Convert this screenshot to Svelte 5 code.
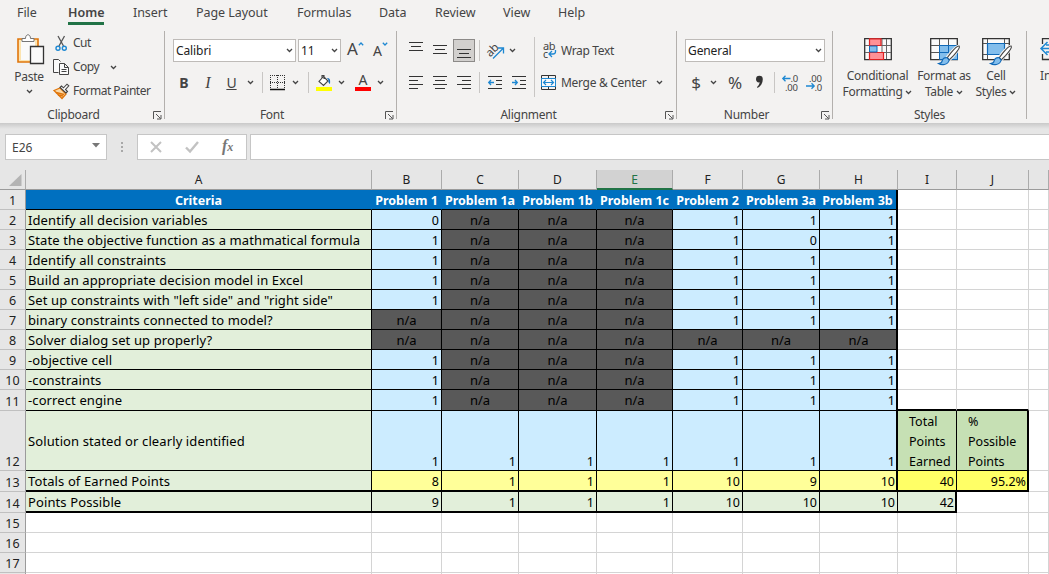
<script lang="ts">
  type Cell = { text: string; kind: string };

  const tabs = [
    { name: "File", width: 51 },
    { name: "Home", width: 65 },
    { name: "Insert", width: 63 },
    { name: "Page Layout", width: 101 },
    { name: "Formulas", width: 82 },
    { name: "Data", width: 56 },
    { name: "Review", width: 68 },
    { name: "View", width: 55 },
    { name: "Help", width: 60 },
  ];

  const columns = ["A", "B", "C", "D", "E", "F", "G", "H", "I", "J", ""];
  const letters = "ABCDEFGHIJK";

  const scores: [string, string[]][] = [
    ["Identify all decision variables", ["0", "n/a", "n/a", "n/a", "1", "1", "1"]],
    ["State the objective function as a mathmatical formula", ["1", "n/a", "n/a", "n/a", "1", "0", "1"]],
    ["Identify all constraints", ["1", "n/a", "n/a", "n/a", "1", "1", "1"]],
    ["Build an appropriate decision model in Excel", ["1", "n/a", "n/a", "n/a", "1", "1", "1"]],
    ['Set up constraints with "left side" and "right side"', ["1", "n/a", "n/a", "n/a", "1", "1", "1"]],
    ["binary constraints connected to model?", ["n/a", "n/a", "n/a", "n/a", "1", "1", "1"]],
    ["Solver dialog set up properly?", ["n/a", "n/a", "n/a", "n/a", "n/a", "n/a", "n/a"]],
    ["-objective cell", ["1", "n/a", "n/a", "n/a", "1", "1", "1"]],
    ["-constraints", ["1", "n/a", "n/a", "n/a", "1", "1", "1"]],
    ["-correct engine", ["1", "n/a", "n/a", "n/a", "1", "1", "1"]],
    ["Solution stated or clearly identified", ["1", "1", "1", "1", "1", "1", "1"]],
  ];

  const blank = (n: number): Cell[] => Array.from({ length: n }, () => ({ text: "", kind: "empty" }));
  const fill = (values: string[], kind: string): Cell[] => values.map((text) => ({ text, kind }));

  const rows: Cell[][] = [
    [
      ...fill(["Criteria", "Problem 1", "Problem 1a", "Problem 1b", "Problem 1c", "Problem 2", "Problem 3a", "Problem 3b"], "head"),
      ...blank(3),
    ],
    ...scores.map(([label, values], i) => [
      { text: label, kind: "label" },
      ...values.map((text) => ({ text, kind: text === "n/a" ? "na" : "score" })),
      ...(i === 10
        ? [...fill(["Total\nPoints\nEarned", "%\nPossible\nPoints"], "summary"), ...blank(1)]
        : blank(3)),
    ]),
    [
      { text: "Totals of Earned Points", kind: "label" },
      ...fill(["8", "1", "1", "1", "10", "9", "10"], "earned"),
      ...fill(["40", "95.2%"], "total"),
      ...blank(1),
    ],
    [
      { text: "Points Possible", kind: "label" },
      ...fill(["9", "1", "1", "1", "10", "10", "10", "42"], "possible"),
      ...blank(2),
    ],
    blank(11),
    blank(11),
    blank(11),
    blank(11),
  ];
</script>

{#snippet chevron()}
  <svg class="chevron" width="7" height="5" viewBox="0 0 7 5"><path d="M1 1l2.5 2.5L6 1" fill="none" stroke="#444" stroke-width="1.3" /></svg>
{/snippet}

{#snippet launcher()}
  <svg class="launcher" width="9" height="9" viewBox="0 0 9 9" fill="none" stroke="#555">
    <path d="M.5 8V.5H8M3 3l4.5 4.5M8 4v4H4" />
  </svg>
{/snippet}

{#snippet brush()}
  <path d="M28.8 8.2c-2 0-4.6 2.5-8.6 7.3l-3 4 2 2.3 3.8-3.5c3.5-4 6.8-8 5.8-10.1z" fill="#f9f8f7" stroke="#f3f2f1" stroke-width="3" />
  <path d="M29.2 8c-1.7-.5-5 2.8-8.5 7.2l-3.4 4.5 1.900 2.200 4.300-4.200c3.700-4.100 6.800-8.400 5.700-9.700z" fill="#fff" stroke="#444" stroke-width="1.1" />
  <path d="M17 19.7c-3-.3-4.500 1.500-4.900 3.500-.3 1.500-1.800 2.200-3.600 2.300 2.800 1.900 9.500 1.800 10.700-3.500z" fill="#83beec" stroke="#1069b8" stroke-width="1.1" />
{/snippet}

<div class="excel">
  <nav class="tabs">
    {#each tabs as tab}
      <div class="tab" class:active={tab.name === "Home"} style="width: {tab.width}px"><span>{tab.name}</span></div>
    {/each}
  </nav>

  <div class="ribbon">
    <section class="group clipboard">
      <div class="tools">
        <div class="paste">
          <svg width="28" height="31" viewBox="0 0 28 31">
            <path d="M1 5h20v23H1z" fill="#fce4b0" stroke="#e0750a" stroke-width="1.6" />
            <path d="M4 7h14v19H4z" fill="#fafafa" />
            <path d="M5 7.500V4.500h3.500C8.500-.5 13.500-.5 13.500 4.500H17v3z" fill="#fff" stroke="#767676" />
            <path d="M13.500 12.500h13v17h-13z" fill="#fafafa" stroke="#333" stroke-width="1.3" />
          </svg>
          <span>Paste</span>
          {@render chevron()}
        </div>
        <div class="edits">
          <div class="edit">
            <svg width="17" height="17" viewBox="0 0 17 17" fill="none">
              <path d="M5 1l5.500 10M11.500 1L6 11" stroke="#555" stroke-width="1.3" />
              <circle cx="5" cy="13.3" r="2" stroke="#1e88d2" stroke-width="1.4" />
              <circle cx="11.3" cy="13.3" r="2" stroke="#1e88d2" stroke-width="1.4" />
            </svg>
            <span>Cut</span>
          </div>
          <div class="edit">
            <svg width="17" height="17" viewBox="0 0 17 17" fill="#fafafa" stroke="#444">
              <path d="M5.500 13.500h-5V.5h5l2 2" />
              <path d="M6.500 4.500h5l4 4v7h-9zM11.500 4.500v4h4M8.500 10.500h5M8.500 12.500h5" />
            </svg>
            <span>Copy</span>
            {@render chevron()}
          </div>
          <div class="edit">
            <svg width="17" height="17" viewBox="0 0 17 17">
              <path d="M1 7.500l6-2.500 6 6-4 4.500z" fill="#fbd9a6" stroke="#e0750a" stroke-width="1.3" />
              <path d="M3 9.500l8 2M5 12l5 1" stroke="#e0750a" stroke-width="1.5" />
              <path d="M7 4.500l1.500-1.500 2 1.800L14 1.200l1.800 1.700-3.300 3.600 2 2-1.500 1.500z" fill="#fff" stroke="#444" stroke-width="1.1" />
            </svg>
            <span>Format Painter</span>
          </div>
        </div>
      </div>
      <footer><span>Clipboard</span>{@render launcher()}</footer>
    </section>

    <section class="group font">
      <div class="font-pick">
        <div class="select"><span>Calibri</span>{@render chevron()}</div>
        <div class="select"><span>11</span>{@render chevron()}</div>
        <div class="grow">A<svg width="6" height="4" viewBox="0 0 6 4"><path d="M.8 3.200L3 1l2.200 2.200" fill="none" stroke="#1e88d2" stroke-width="1.3" /></svg></div>
        <div class="grow small">A<svg width="6" height="4" viewBox="0 0 6 4"><path d="M.8.800L3 3 5.200.800" fill="none" stroke="#1e88d2" stroke-width="1.3" /></svg></div>
      </div>
      <div class="font-style">
        <b>B</b>
        <i>I</i>
        <u>U</u>
        {@render chevron()}
        <span class="rule"></span>
        <svg width="16" height="16" viewBox="0 0 16 16" fill="none" stroke="#333">
          <path d="M0 .5h15M0 7.500h15M.5 0v14M7.500 0v14M14.500 0v14" stroke-dasharray="1 1" />
          <path d="M0 14.500h15" stroke="#111" stroke-width="1.5" />
        </svg>
        {@render chevron()}
        <span class="rule"></span>
        <svg width="16" height="17" viewBox="0 0 16 17">
          <path d="M7.500 2.500L12 7l-4.500 4.500L3 7.500zM6 5V1.500h2V5" fill="#fff" stroke="#444" stroke-width="1.1" />
          <path d="M11 4c3 0 3.500 2 3 6-1.500-1-2-2.500-1.500-4z" fill="#1069b8" />
          <path d="M0 13h16v4H0z" fill="#ff0" />
        </svg>
        {@render chevron()}
        <span class="ink">A</span>
        {@render chevron()}
      </div>
      <footer><span>Font</span>{@render launcher()}</footer>
    </section>

    <section class="group alignment">
      <div class="tools">
        <div class="align">
          <div class="align-row">
            <svg width="14" height="20" viewBox="0 0 14 20" stroke="#333"><path d="M0 1.500h14M2 5.500h10M0 9.500h14" /></svg>
            <svg width="14" height="20" viewBox="0 0 14 20" stroke="#333"><path d="M0 4.500h14M2 8.500h10M0 12.500h14" /></svg>
            <div class="pressed"><svg width="14" height="20" viewBox="0 0 14 20" stroke="#333"><path d="M0 8.500h14M2 12.500h10M0 16.500h14" /></svg></div>
            <span class="rule"></span>
            <svg width="18" height="18" viewBox="0 0 18 18">
              <text class="glyph" x="-1.5" y="12" transform="rotate(-45 5 8)" font-size="11.5">ab</text>
              <path d="M6 16.500L16 6.500M11 6h5.500v5.500" fill="none" stroke="#1e88d2" stroke-width="1.3" />
            </svg>
            {@render chevron()}
          </div>
          <div class="align-row lower">
            <svg width="14" height="14" viewBox="0 0 14 14" stroke="#333"><path d="M0 .5h14M0 4.500h9M0 8.500h14M0 12.500h9" /></svg>
            <svg width="14" height="14" viewBox="0 0 14 14" stroke="#333"><path d="M0 .5h14M2 4.500h10M0 8.500h14M2 12.500h10" /></svg>
            <svg width="14" height="14" viewBox="0 0 14 14" stroke="#333"><path d="M0 .5h14M5 4.500h9M0 8.500h14M5 12.500h9" /></svg>
            <span class="rule"></span>
            <svg width="14" height="14" viewBox="0 0 14 14" fill="none" stroke="#333">
              <path d="M0 .5h14M8 4.500h6M8 8.500h6M0 12.500h14" />
              <path d="M.8 6.500H6M3 4L.7 6.500 3 9" stroke="#1e88d2" stroke-width="1.3" />
            </svg>
            <svg width="14" height="14" viewBox="0 0 14 14" fill="none" stroke="#333">
              <path d="M0 .5h14M8 4.500h6M8 8.500h6M0 12.500h14" />
              <path d="M0 6.500h5.200M3 4l2.300 2.500L3 9" stroke="#1e88d2" stroke-width="1.3" />
            </svg>
          </div>
        </div>
        <span class="rule tall"></span>
        <div class="merge">
          <div class="merge-row">
            <svg width="16" height="17" viewBox="0 0 16 17">
              <text class="glyph" x="2" y="8" font-size="11">ab</text>
              <text class="glyph" x="2" y="15.5" font-size="10.5">c</text>
              <path d="M14.500 8v1.500c0 1.700-1 2.500-2.500 2.500H8.500M11 9l-3 3 3 3" fill="none" stroke="#1e88d2" stroke-width="1.3" />
            </svg>
            <span>Wrap Text</span>
          </div>
          <div class="merge-row lower">
            <svg width="16" height="16" viewBox="0 0 16 16" fill="none">
              <path d="M.5.500h14v14H.500zM7.500.500v3M7.500 11.500v3" stroke="#333" />
              <path d="M.5 3.500h14v8H.500z" fill="#fafafa" stroke="#1e88d2" />
              <path d="M2.500 7.500h10M5 5L2.500 7.500 5 10M10 5l2.500 2.500L10 10" stroke="#1e88d2" stroke-width="1.2" />
            </svg>
            <span>Merge &amp; Center</span>
            {@render chevron()}
          </div>
        </div>
      </div>
      <footer><span>Alignment</span>{@render launcher()}</footer>
    </section>

    <section class="group number">
      <div class="select"><span>General</span>{@render chevron()}</div>
      <div class="number-row">
        <span class="big">$</span>
        {@render chevron()}
        <span class="big">%</span>
        <svg width="9" height="15" viewBox="0 0 9 15"><path d="M1 4.200a3.200 3.200 0 0 1 6.800 0c0 4-2 7.300-5.300 8.800L2 12c1.600-1.300 2.500-3 2.600-4.700C2.500 7.800 1 6.200 1 4.200z" fill="#333" /></svg>
        <span class="rule"></span>
        <svg width="17" height="17" viewBox="0 0 17 17">
          <text class="glyph" x="8.500" y="8" font-size="9.5">.0</text>
          <text class="glyph" x="3" y="16.500" font-size="9.5">.00</text>
          <path d="M1 4.500h7.500M3.500 1.700L.8 4.500l2.700 2.800" fill="none" stroke="#1e88d2" stroke-width="1.3" />
        </svg>
        <svg width="17" height="17" viewBox="0 0 17 17">
          <text class="glyph" x="3" y="8" font-size="9.5">.00</text>
          <text class="glyph" x="8.500" y="16.500" font-size="9.5">.0</text>
          <path d="M0 12h8M5.500 9.200L8.200 12l-2.700 2.800" fill="none" stroke="#1e88d2" stroke-width="1.3" />
        </svg>
      </div>
      <footer><span>Number</span>{@render launcher()}</footer>
    </section>

    <section class="group styles">
      <div class="tools">
        <div class="style-button">
          <svg width="28" height="28" viewBox="0 0 28 28">
            <path d="M.7.700h26.600v21H.700z" fill="#fafafa" stroke="#333" stroke-width="1.3" />
            <path d="M1 7.500h26M1 14.500h26M5.500 1v20M18 1v20M22.500 1v20" fill="none" stroke="#666" />
            <path d="M5.500.800H17v6.700H5.500zM5.500 14.500h14v7h-14z" fill="#ff9196" stroke="#e02020" stroke-width="1.2" />
            <path d="M5.500 8H13v6H5.500z" fill="#83beec" stroke="#1069b8" />
          </svg>
          <span>Conditional</span>
          <span>Formatting {@render chevron()}</span>
        </div>
        <div class="style-button">
          <svg width="30" height="28" viewBox="0 0 30 28">
            <path d="M.7.700h26.600v21H.700z" fill="#fafafa" stroke="#333" stroke-width="1.3" />
            <path d="M9.500 7.500h18v14h-18z" fill="#83beec" />
            <path d="M1 7.500h26M1 14.500h9M9.500 1v20M18.500 1v7" fill="none" stroke="#555" />
            <path d="M9.500 21.500v-14h18M10 14.500h17M18.500 8v13M27.500 8v13.500H10" fill="none" stroke="#1069b8" />
            {@render brush()}
          </svg>
          <span>Format as</span>
          <span>Table {@render chevron()}</span>
        </div>
        <div class="style-button">
          <svg width="30" height="28" viewBox="0 0 30 28">
            <path d="M.7.700h26.600v21H.700z" fill="#fafafa" stroke="#333" stroke-width="1.3" />
            <path d="M1 5.500h26M1 16.500h26M5.500 1v20M22.500 1v20" fill="none" stroke="#555" />
            <path d="M5.500 5.500h17v11h-17z" fill="#83beec" stroke="#1069b8" stroke-width="1.2" />
            {@render brush()}
          </svg>
          <span>Cell</span>
          <span>Styles {@render chevron()}</span>
        </div>
      </div>
      <footer><span>Styles</span></footer>
    </section>

    <section class="group cells">
      <div class="insert">
        <svg width="28" height="28" viewBox="0 0 28 28" fill="none">
          <path d="M2.500 6V.700H27M2.500 16v5.500H27" stroke="#333" stroke-width="1.3" />
          <path d="M10 7h18v7H10z" fill="#83beec" />
          <path d="M7.500 4L1 10.500 7.500 17M1 10.500h12M6 7h15M6 14h15" stroke="#1e88d2" stroke-width="1.5" />
        </svg>
        <span>Insert</span>
      </div>
    </section>
  </div>

  <div class="formula-bar">
    <div class="name-box"><span>E26</span><svg width="8" height="5" viewBox="0 0 8 5"><path d="M0 0h8L4 4.500z" fill="#777" /></svg></div>
    <div class="dots"><i></i><i></i><i></i></div>
    <div class="entry">
      <svg width="12" height="12" viewBox="0 0 12 12"><path d="M1 1l10 10M11 1L1 11" stroke="#c2c2c2" stroke-width="2" /></svg>
      <svg width="14" height="12" viewBox="0 0 14 12"><path d="M1 6.500l4 4L13 1" fill="none" stroke="#c2c2c2" stroke-width="2.4" /></svg>
      <span class="fx">f<small>x</small></span>
    </div>
    <div class="formula"></div>
  </div>

  <div class="sheet">
    <div class="corner"><svg width="13" height="13" viewBox="0 0 13 13"><path d="M12.500 0v12H0z" fill="#b4b4b4" /></svg></div>
    {#each columns as column}
      <div class="column-head" class:selected={column === "E"}>{column}</div>
    {/each}
    {#each rows as row, r}
      <div class="row-head">{r + 1}</div>
      {#each row as cell, c}
        <div class="cell {cell.kind} r{r + 1} c{letters[c]}">{cell.text}</div>
      {/each}
    {/each}
  </div>
</div>

<style>
  :global(body) {
    overflow: hidden;
  }

  .excel {
    width: 1049px;
    height: 574px;
    overflow: hidden;
    background: #e6e6e6;
    color: #444;
    font-family: "Noto Sans", "Open Sans", sans-serif;
    font-size: 12px;
  }

  .excel * {
    box-sizing: border-box;
  }

  svg {
    display: block;
    flex: none;
    overflow: visible;
  }

  .tabs {
    display: flex;
    height: 31px;
    padding-left: 17px;
    background: #f3f2f1;
  }

  .tab {
    flex: none;
    font-size: 12.5px;
    line-height: 25px;
    letter-spacing: -0.05px;
    white-space: nowrap;
  }

  .tab span {
    display: inline-block;
    height: 25px;
  }

  .tab.active span {
    border-bottom: 3px solid #217346;
    font-weight: 600;
    letter-spacing: 0;
  }

  .ribbon {
    display: flex;
    height: 92px;
    background: #f3f2f1;
  }

  .group {
    display: flex;
    flex: none;
    flex-direction: column;
    height: 88px;
    border-right: 1px solid #b3b0ad;
    white-space: nowrap;
  }

  .group footer {
    position: relative;
    margin-top: auto;
    height: 14px;
    line-height: 20px;
    letter-spacing: -0.25px;
    text-align: center;
  }

  .launcher {
    position: absolute;
    right: 2px;
    bottom: -1px;
  }

  .tools {
    display: flex;
  }

  .rule {
    width: 1px;
    height: 21px;
    background: #c8c6c4;
  }

  .rule.tall {
    height: 60px;
    margin: 6px 6px 0 0;
  }

  .select {
    display: flex;
    align-items: center;
    justify-content: space-between;
    height: 23px;
    padding: 0 2px;
    border: 1px solid #bebbb8;
    background: #fff;
    color: #222;
    letter-spacing: -0.1px;
  }

  .clipboard {
    width: 165px;
  }

  .clipboard footer {
    padding-right: 17px;
  }

  .paste {
    display: flex;
    flex-direction: column;
    align-items: center;
    width: 53px;
    padding: 3px 0 0 5px;
  }

  .paste svg:first-child {
    margin-left: 4px;
  }

  .paste span {
    line-height: 23px;
    letter-spacing: -0.3px;
  }

  .paste .chevron {
    margin-top: 1px;
  }

  .edit {
    display: flex;
    align-items: center;
    height: 24px;
    gap: 3px;
  }

  .edit span {
    margin-top: -1px;
    letter-spacing: -0.5px;
  }

  .edit .chevron {
    margin-left: 8px;
  }

  .font {
    width: 232px;
    padding-left: 8px;
  }

  .font footer {
    padding-right: 25px;
  }

  .font-pick {
    display: grid;
    grid-template-columns: 123px 43px 28px 20px;
    column-gap: 2px;
    padding-top: 8px;
  }

  .grow {
    display: flex;
    align-items: flex-start;
    padding-left: 4px;
    font-size: 17px;
    line-height: 20px;
  }

  .grow svg {
    margin-top: 3px;
  }

  .grow.small {
    padding-left: 0;
    font-size: 14px;
    line-height: 23px;
  }

  .font-style {
    display: grid;
    grid-template-columns: 22px 26px 21px 16px 8px 24px 10px 16px 16px 18px 26px 8px;
    align-items: center;
    justify-items: center;
    height: 21px;
    margin-top: 10px;
    font-size: 14px;
  }

  .font-style i {
    font-family: "Liberation Serif", serif;
    font-size: 16px;
  }

  .ink {
    width: 16px;
    height: 17px;
    border-bottom: 4px solid #f00;
    line-height: 12px;
    text-align: center;
  }

  .alignment {
    width: 280px;
    padding-left: 7px;
  }

  .alignment footer {
    padding-right: 23px;
  }

  .align {
    width: 130px;
    padding-top: 8px;
  }

  .align-row {
    display: grid;
    grid-template-columns: 24px 24px 24px 7px 25px 9px;
    align-items: center;
    justify-items: center;
    height: 23px;
  }

  .align-row.lower {
    grid-template-columns: 24px 24px 24px 7px 24px 24px;
    margin-top: 9px;
  }

  .pressed {
    display: grid;
    place-items: center;
    width: 22px;
    height: 23px;
    border: 1px solid #8c8a88;
    background: #d2d0ce;
  }

  .merge {
    padding-top: 8px;
  }

  .merge-row {
    display: flex;
    align-items: center;
    height: 23px;
    gap: 4px;
    letter-spacing: -0.35px;
  }

  .merge-row.lower {
    margin-top: 9px;
    letter-spacing: -0.3px;
  }

  .merge-row .chevron {
    margin-left: 6px;
  }

  .glyph {
    fill: #444;
    font-family: "Noto Sans", sans-serif;
    letter-spacing: -0.3px;
  }

  .number {
    width: 156px;
    padding: 8px 0 0 8px;
  }

  .number .select {
    width: 140px;
  }

  .number footer {
    padding-right: 24px;
  }

  .number-row {
    display: grid;
    grid-template-columns: 22px 13px 30px 19px 10px 22px 26px;
    align-items: center;
    justify-items: center;
    height: 21px;
    margin-top: 10px;
  }

  .big {
    font-size: 17px;
    line-height: 19px;
  }

  .styles {
    width: 194px;
  }

  .styles .tools {
    display: grid;
    grid-template-columns: 75px 58px 46px;
    padding: 7px 0 0 7px;
  }

  .style-button {
    display: flex;
    flex-direction: column;
    align-items: center;
  }

  .style-button > svg {
    margin-bottom: 2px;
  }

  .style-button > svg[width="30"] {
    margin-left: 2px;
  }

  .style-button span {
    display: flex;
    align-items: center;
    gap: 3px;
    line-height: 16px;
    letter-spacing: -0.3px;
  }

  .cells {
    width: 22px;
    border: 0;
    overflow: hidden;
  }

  .insert {
    padding: 7px 0 0 13px;
  }

  .insert span {
    display: block;
    margin-top: 2px;
    line-height: 16px;
  }

  .formula-bar {
    display: flex;
    height: 47px;
    padding: 11px 0 0 5px;
    background: linear-gradient(#c9c9c9, #e6e6e6 6px);
  }

  .name-box,
  .entry,
  .formula {
    display: flex;
    align-items: center;
    height: 26px;
    border: 1px solid #c6c6c6;
    background: #fff;
  }

  .name-box {
    justify-content: space-between;
    width: 102px;
    padding: 0 6px;
  }

  .name-box svg {
    margin-bottom: 3px;
  }

  .dots {
    display: flex;
    flex-direction: column;
    justify-content: center;
    gap: 2px;
    width: 30px;
    height: 26px;
    padding-left: 14px;
  }

  .dots i {
    width: 2px;
    height: 2px;
    background: #a8a8a8;
  }

  .entry {
    width: 110px;
    padding-left: 12px;
    gap: 23px;
  }

  .fx {
    padding-bottom: 2px;
    color: #777;
    font: italic 700 16px "Liberation Serif", serif;
  }

  .fx small {
    font-size: 12px;
  }

  .formula {
    flex: 1;
    margin-left: 3px;
    border-right: 0;
  }

  .sheet {
    display: grid;
    grid-template-columns: 26px 346px 70px 77px 78px 76px 70px 77px 78px 59px 72px 20px;
    grid-template-rows: 20px repeat(10, 20px) 21px 60px 21px 21px 20px 20px 20px 20px;
    color: #000;
  }

  .corner {
    display: flex;
    align-items: flex-end;
    justify-content: flex-end;
    padding: 0 3px 2px 0;
    border-right: 1px solid #ababab;
    border-bottom: 1px solid #9b9b9b;
  }

  .column-head {
    border-right: 1px solid #ababab;
    border-bottom: 1px solid #9b9b9b;
    color: #222;
    line-height: 20px;
    text-align: center;
  }

  .column-head.selected {
    border-bottom: 2px solid #217346;
    background: #d2d2d2;
    color: #217346;
  }

  .row-head {
    display: flex;
    align-items: flex-end;
    justify-content: center;
    border-right: 1px solid #9b9b9b;
    border-bottom: 1px solid #c0c0c0;
    color: #222;
    font-size: 12.5px;
    line-height: 17px;
  }

  .cell {
    display: flex;
    align-items: flex-end;
    justify-content: flex-end;
    min-width: 0;
    padding: 0 2px;
    border-right: 1px solid #000;
    border-bottom: 1px solid #000;
    font-size: 12.5px;
    line-height: 17px;
    white-space: pre;
  }

  .empty {
    border-color: #d4d4d4;
    background: #fff;
  }

  .head {
    justify-content: center;
    padding: 0;
    border-right-color: #0070c0;
    background: #0070c0;
    color: #fff;
    font-weight: 700;
  }

  .label {
    justify-content: flex-start;
    background: #e2efda;
    font-size: 13px;
    letter-spacing: 0.11px;
  }

  .label.r12 {
    align-items: center;
    padding-top: 2px;
  }

  .score {
    background: #ccecff;
  }

  .na {
    justify-content: center;
    background: #595959;
    font-size: 13px;
  }

  .earned {
    background: #ff9;
  }

  .total {
    background: #ff6;
  }

  .possible {
    background: #e2efda;
  }

  .summary {
    align-items: flex-start;
    justify-content: flex-start;
    padding: 1px 0 0 11px;
    background: #c6e0b4;
    line-height: 20px;
  }

  .cH:not(.empty, .possible) {
    border-right: 2px solid #000;
    padding-right: 1px;
  }

  .r13:not(.empty),
  .r14:not(.empty) {
    border-bottom-width: 2px;
  }

  .r11.cI,
  .r11.cJ {
    border-bottom: 2px solid #000;
  }

  .cJ.summary,
  .cJ.total,
  .cI.possible {
    border-right-width: 2px;
    padding-right: 1px;
  }

  .r11 {
    padding-bottom: 1px;
  }
</style>
